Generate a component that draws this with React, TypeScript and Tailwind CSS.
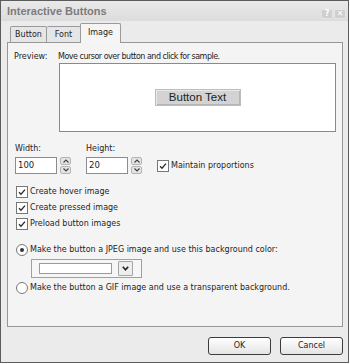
import React from "react";

const ui = "font-['DejaVu_Sans',Tahoma,sans-serif] text-[8px] text-[#1e1e1e]";

function Check() {
  return (
    <span className="w-[12px] h-[12px] shrink-0 border border-[#777] bg-white flex items-center justify-center">
      <svg width="8" height="8" viewBox="0 0 8 8">
        <path d="M1 4.2 L3 6.2 L7 1.6" stroke="#2a2a2a" strokeWidth="1.3" fill="none" />
      </svg>
    </span>
  );
}

function Radio({ on }: { on?: boolean }) {
  return (
    <span className="w-[12px] h-[12px] shrink-0 rounded-full border border-[#777] bg-white flex items-center justify-center">
      {on && <span className="w-[4px] h-[4px] rounded-full bg-[#333]" />}
    </span>
  );
}

function Spinner() {
  return (
    <div className="w-[11px] h-[17px] ml-[3px] flex flex-col gap-[1px]">
      <div className="flex-1 rounded-[2px] border border-[#b4b4b4] bg-[#e4e4e4] flex items-center justify-center">
        <svg width="6" height="4" viewBox="0 0 6 4">
          <path d="M0.5 3.5 L3 1 L5.5 3.5" stroke="#444" strokeWidth="1.2" fill="none" />
        </svg>
      </div>
      <div className="flex-1 rounded-[2px] border border-[#b4b4b4] bg-[#e4e4e4] flex items-center justify-center">
        <svg width="6" height="4" viewBox="0 0 6 4">
          <path d="M0.5 0.5 L3 3 L5.5 0.5" stroke="#444" strokeWidth="1.2" fill="none" />
        </svg>
      </div>
    </div>
  );
}

function NumField({ value }: { value: string }) {
  return (
    <div className="flex items-center">
      <div className="w-[42px] h-[17px] border border-[#8c8c8c] bg-white flex items-center pl-[2px] text-[8.5px]">
        {value}
      </div>
      <Spinner />
    </div>
  );
}

export default function App() {
  return (
    <div className={`w-[350px] h-[364px] bg-white ${ui}`}>
      <div className="w-[349px] h-[363px] border border-[#5c5c5c] bg-[#ebebeb] flex flex-col">
        {/* title bar */}
        <div className="h-[20px] bg-gradient-to-b from-[#e9e9e9] to-[#dcdcdc] flex items-center pl-[6px] pr-[2px]">
          <span className="font-['Liberation_Sans',Arial,sans-serif] font-bold text-[11px] text-[#7c7c7c] flex-1">
            Interactive Buttons
          </span>
          <div className="flex gap-[1px] mt-[5px]">
            <span className="w-[12px] h-[10px] rounded-[2px] bg-[#cfcfcf] border border-[#e6e6e6] flex items-center justify-center text-white text-[8px] font-bold leading-none">
              ?
            </span>
            <span className="w-[12px] h-[10px] rounded-[2px] bg-[#cfcfcf] border border-[#e6e6e6] flex items-center justify-center text-white text-[8px] font-bold leading-none">
              ✕
            </span>
          </div>
        </div>

        {/* tabs */}
        <div className="h-[21px] flex items-end pl-[9px]">
          <div className="w-[37px] h-[16px] border border-b-0 border-[#9a9a9a] bg-[#e6e6e6] rounded-t-[2px] flex items-center justify-center">
            Button
          </div>
          <div className="w-[34px] h-[16px] border border-b-0 border-l-0 border-[#9a9a9a] bg-[#e6e6e6] rounded-t-[2px] flex items-center justify-center">
            Font
          </div>
          <div className="relative z-10 -mb-px -ml-px w-[41px] h-[20px] border border-b-0 border-[#9a9a9a] bg-[#f5f5f5] rounded-t-[2px] flex items-center justify-center pb-[2px]">
            Image
          </div>
        </div>

        {/* panel */}
        <div className="ml-[6px] w-[336px] h-[285px] border border-[#979797] bg-[#f4f4f4] flex flex-col">
          <div className="mt-[8px] h-[12px] leading-[12px] flex pl-[6px]">
            <span className="w-[44px]">Preview:</span>
            <span className="tracking-[-0.5px]">Move cursor over button and click for sample.</span>
          </div>
          <div className="ml-[51px] w-[277px] h-[69px] border border-[#8a8a8a] bg-white flex items-center justify-center">
            <div className="w-[86px] h-[17px] bg-[#d3d3d3] border border-[#bdbdbd] shadow-[inset_1px_1px_0_#e8e8e8,inset_-1px_-1px_0_#b5b5b5] flex items-center justify-center font-['Liberation_Sans',Arial,sans-serif] text-[11.5px] text-[#222]">
              Button Text
            </div>
          </div>

          <div className="mt-[11px] h-[12px] leading-[12px] flex pl-[7px]">
            <span className="w-[71px]">Width:</span>
            <span>Height:</span>
          </div>
          <div className="mt-[2px] h-[17px] flex items-center pl-[7px]">
            <div className="w-[71px]">
              <NumField value="100" />
            </div>
            <div className="w-[71px]">
              <NumField value="20" />
            </div>
            <div className="flex items-center gap-[2px]">
              <Check />
              <span>Maintain proportions</span>
            </div>
          </div>

          <div className="mt-[10px] flex flex-col pl-[8px]">
            <div className="h-[16px] flex items-center gap-[2px]">
              <Check />
              <span>Create hover image</span>
            </div>
            <div className="h-[16px] flex items-center gap-[2px]">
              <Check />
              <span>Create pressed image</span>
            </div>
            <div className="h-[16px] flex items-center gap-[2px]">
              <Check />
              <span>Preload button images</span>
            </div>
          </div>

          <div className="mt-[10px] h-[16px] flex items-center gap-[2px] pl-[8px]">
            <Radio on />
            <span>Make the button a JPEG image and use this background color:</span>
          </div>
          <div className="mt-[1px] ml-[23px] w-[111px] h-[19px] border border-[#a0a0a0] bg-[#f6f6f6] flex items-center pl-[7px]">
            <div className="w-[73px] h-[11px] border border-[#9a9a9a] bg-white" />
            <div className="ml-[6px] w-[15px] h-[15px] border border-[#a5a5a5] bg-[#eeeeee] rounded-[1px] flex items-center justify-center">
              <svg width="7" height="5" viewBox="0 0 7 5">
                <path d="M0.8 0.8 L3.5 3.8 L6.2 0.8" stroke="#222" strokeWidth="1.6" fill="none" />
              </svg>
            </div>
          </div>
          <div className="mt-[2px] h-[16px] flex items-center gap-[2px] pl-[8px]">
            <Radio />
            <span>Make the button a GIF image and use a transparent background.</span>
          </div>
        </div>

        {/* buttons */}
        <div className="mt-[10px] flex justify-end gap-[9px] pr-[5px]">
          <div className="w-[63px] h-[18px] rounded-[3px] border border-[#3c3c3c] bg-gradient-to-b from-white to-[#e4e4e4] flex items-center justify-center">
            OK
          </div>
          <div className="w-[63px] h-[18px] rounded-[3px] border border-[#3c3c3c] bg-gradient-to-b from-white to-[#e4e4e4] flex items-center justify-center">
            Cancel
          </div>
        </div>
      </div>
    </div>
  );
}
